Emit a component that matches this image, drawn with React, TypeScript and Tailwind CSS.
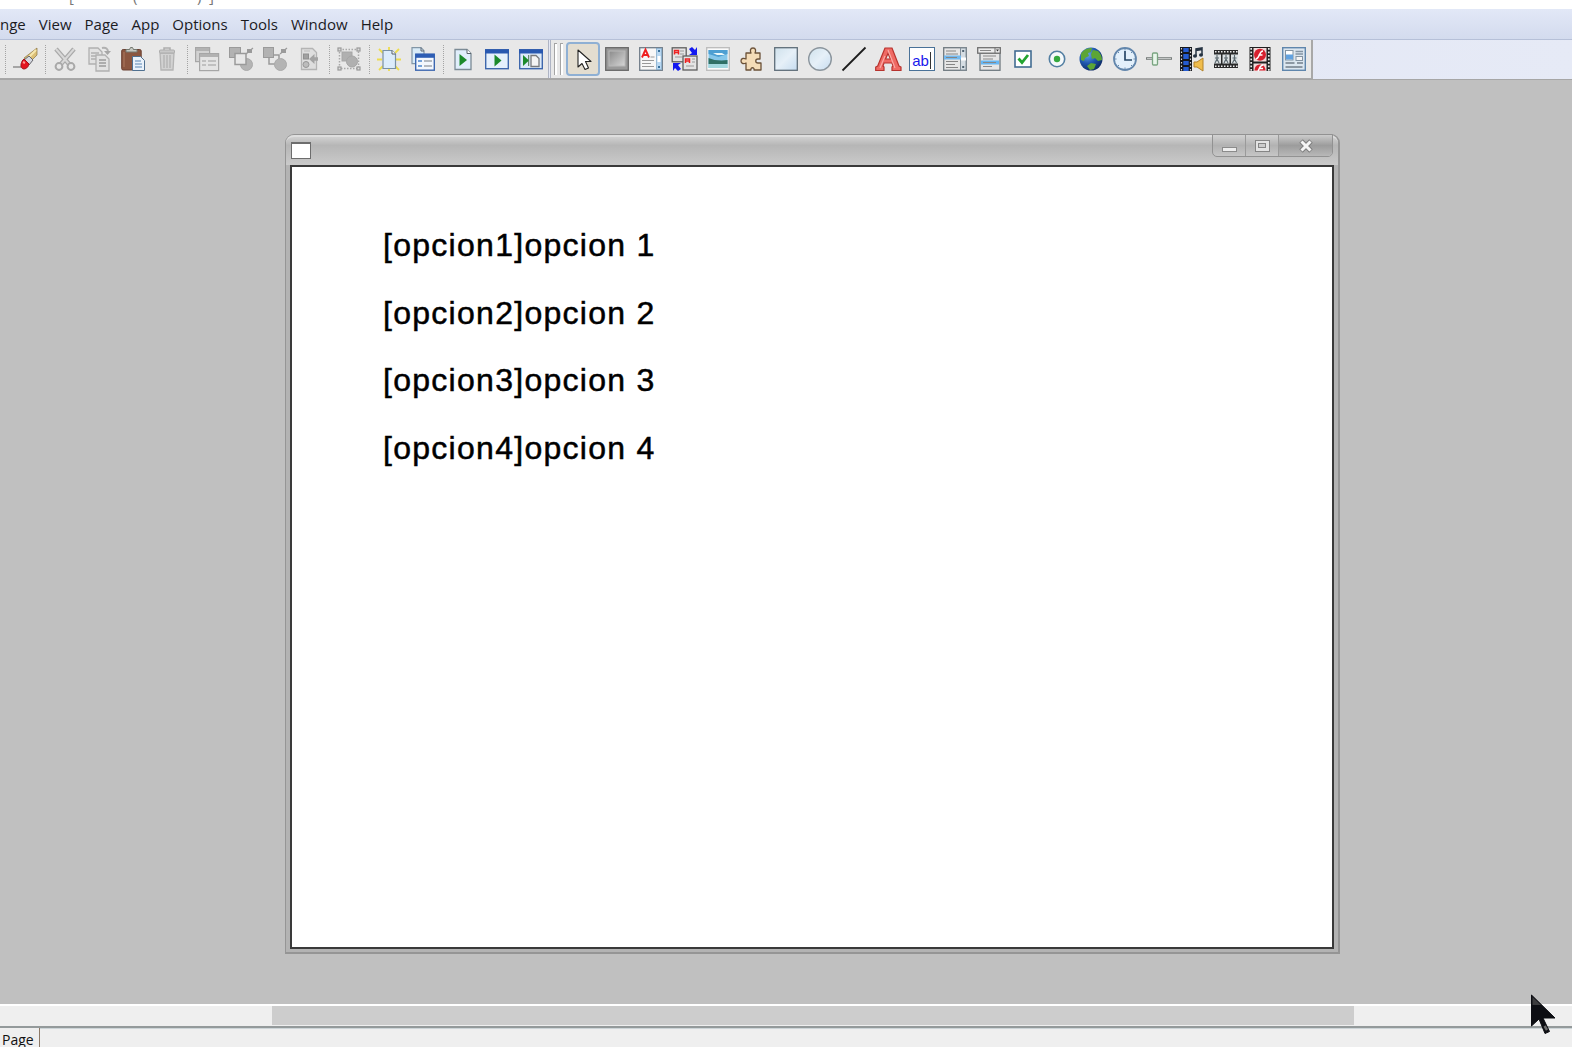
import type { ReactNode } from "react";

function Icon({ children, w = 24 }: { children: ReactNode; w?: number }) {
  return (
    <svg width={w} height="24" viewBox={`0 0 ${w} 24`} className="shrink-0 overflow-visible">
      {children}
    </svg>
  );
}

function Cell({ children }: { children: ReactNode }) {
  return <div className="flex w-[34px] shrink-0 items-center justify-center">{children}</div>;
}

function ToolCell({ children, active = false }: { children: ReactNode; active?: boolean }) {
  return (
    <div
      className={
        active
          ? "flex h-[34px] w-[33.86px] shrink-0 items-center justify-center rounded-[4px] border-2 border-[#8fb0d4] bg-[#e3ddd0]"
          : "flex h-[34px] w-[33.86px] shrink-0 items-center justify-center"
      }
    >
      {children}
    </div>
  );
}

function Sep() {
  return (
    <div className="flex w-[6px] shrink-0 justify-center">
      <div className="h-[29px] border-l border-dotted border-[#a4a4a4]" />
    </div>
  );
}

const Eraser = () => (
  <Icon>
    <path d="M0 20h8" stroke="#a5a5a5" strokeWidth="2" />
    <path d="M24 1v7l-8 8-5-5z" fill="#dcc077" stroke="#8a7440" strokeWidth=".7" />
    <path d="M23 3L13 13" stroke="#f6e7ae" strokeWidth="2" />
    <path d="M16 9l4 4-4 5-5-5z" fill="#d5d8e0" stroke="#66666c" strokeWidth="1" />
    <path d="M11 12l5 5c-1 5-6 6-7 4-2-1-1-7 2-9z" fill="#e41420" stroke="#a01018" />
    <path d="M10 15l2 1" stroke="#ff9a94" strokeWidth="2" />
  </Icon>
);

const Cut = () => (
  <Icon>
    <g fill="none" stroke="#a9a9a9">
      <path d="M3 2l13 15M21 2L8 17" strokeWidth="4.5" />
      <path d="M3 2l13 15M21 2L8 17" stroke="#d8d8d8" strokeWidth="2" />
      <circle cx="6" cy="19.5" r="3.4" strokeWidth="2" />
      <circle cx="18" cy="19.5" r="3.4" strokeWidth="2" />
    </g>
  </Icon>
);

const Copy = () => (
  <Icon>
    <g fill="#e2e2e2" stroke="#b0b0b0" strokeWidth="1.3">
      <path d="M2 1h9l4 4v12H2z" />
      <path d="M4 6h8M4 9h8M4 12h5" />
      <path d="M9 8h9l4 4v12H9z" />
      <path d="M12 13h7M12 16h7M12 19h7" stroke="#9c9c9c" />
      <path d="M15 1c4-1 6 1 6 4" fill="none" strokeWidth="2" />
      <path d="M17 4h7l-3.500 4z" fill="#a6a6a6" stroke="none" />
    </g>
  </Icon>
);

const Paste = () => (
  <Icon>
    <rect x=".7" y="2.500" width="19.500" height="20.500" rx="1.500" fill="#8b5640" stroke="#6a4032" />
    <path d="M3 5v15" stroke="#9c6850" strokeWidth="2" />
    <path d="M5 5V2.500h3.500l1-2h2l1 2H16V5z" fill="#c6c8c2" stroke="#747970" />
    <path d="M11.500 9.500h8l4 4v10h-12z" fill="#eaf2fb" stroke="#4f7090" />
    <path d="M14 14h6M14 17h7M14 20h7" stroke="#5b86b4" strokeWidth="1.200" />
  </Icon>
);

const Trash = () => (
  <Icon>
    <path d="M5 6h14l-1 17H6z" fill="#d2d2d2" stroke="#b4b4b4" strokeWidth="1.300" />
    <path d="M9 8v13M12 8v13M15 8v13" stroke="#b6b6b6" strokeWidth="1.500" />
    <rect x="4.500" y="3" width="15" height="3" rx="1" fill="#c8c8c8" stroke="#adadad" />
    <path d="M9 3V1h6v2" fill="none" stroke="#adadad" strokeWidth="1.500" />
  </Icon>
);

const NewObject = () => (
  <Icon>
    <g stroke="#a6a6a6" strokeWidth="1.200">
      <rect x=".6" y=".6" width="14" height="14" fill="#d2d2d2" />
      <path d="M1 2.500h13" stroke="#b2b2b2" strokeWidth="3" />
      <rect x="4.600" y="6.600" width="19" height="17" fill="#e4e4e4" />
      <path d="M5 8.500h18" stroke="#b2b2b2" strokeWidth="3" />
      <path d="M7 14h4M13 14h8M7 18h4M13 18h8" strokeWidth="2" stroke="#c0c0c0" />
    </g>
  </Icon>
);

const BringForward = () => (
  <Icon>
    <g stroke="#9a9a9a">
      <rect x=".5" y=".5" width="11" height="10" fill="#b2b2b2" />
      <circle cx="17.500" cy="17.500" r="6" fill="#b4b4b4" stroke="#aaa" />
      <rect x="6" y="6.500" width="11" height="11" fill="#e8e8e8" strokeWidth="1.500" />
      <path d="M18 2h5v4h-5z" fill="#9b9b9b" stroke="none" />
      <path d="M17 7l7-6" stroke="#9b9b9b" strokeWidth="1.200" />
    </g>
  </Icon>
);

const SendBack = () => (
  <Icon>
    <g stroke="#9a9a9a">
      <path d="M6 8v9h8M11 8h5v6" fill="none" strokeWidth="1.500" />
      <rect x=".5" y=".5" width="10" height="10" fill="#b2b2b2" />
      <circle cx="17.500" cy="17.500" r="6" fill="#b4b4b4" stroke="#aaa" />
      <path d="M18 2h5v4h-5z" fill="#9b9b9b" stroke="none" />
      <path d="M17 7l7-6" stroke="#9b9b9b" strokeWidth="1.200" />
    </g>
  </Icon>
);

const Library = () => (
  <Icon>
    <path d="M4.500 1.500h11l4 4v17h-15z" fill="#dedede" stroke="#b4b4b4" strokeWidth="1.300" />
    <rect x="6.500" y="7" width="5" height="5" fill="#a0a0a0" stroke="#8f8f8f" />
    <circle cx="9" cy="17.500" r="3" fill="#bcbcbc" stroke="#969696" />
    <path d="M7 4h6" stroke="#bbb" />
    <path d="M21 12h-5" stroke="#a3a3a3" strokeWidth="3.500" />
    <path d="M17.500 7v10L12 12z" fill="#a3a3a3" />
  </Icon>
);

const Group = () => (
  <Icon>
    <rect x="2.500" y="2.500" width="19" height="19" fill="none" stroke="#a8a8a8" strokeWidth="1.500" strokeDasharray="1.500 1.500" />
    <rect x="5" y="5" width="10" height="9" fill="#b0b0b0" stroke="#a6a6a6" />
    <circle cx="15" cy="14.500" r="5.500" fill="#b0b0b0" stroke="#a6a6a6" />
    <g fill="#ddd" stroke="#999" strokeWidth="1.200">
      <rect x="1" y="1" width="3" height="3" />
      <rect x="20" y="1" width="3" height="3" />
      <rect x="1" y="20" width="3" height="3" />
      <rect x="20" y="20" width="3" height="3" />
    </g>
  </Icon>
);

const NewPage = () => (
  <Icon>
    <path d="M2 2l4 4M22 2l-4 4M12 0v3M0 12.500h5M19 12.500h5M2 23l4-4M22 23l-4-4M12 24v-3" stroke="#eddc4e" strokeWidth="1.800" />
    <path d="M6 3.500h9l3.500 3.500v14.500H6z" fill="#dcecfb" stroke="#7890a4" strokeWidth="1.200" />
    <path d="M15 3.500V7h3.500" fill="#fff" stroke="#555f69" />
  </Icon>
);

const PageProps = () => (
  <Icon>
    <path d="M1 .7h9l3 3v13H1z" fill="#d8ebf8" stroke="#8296a6" strokeWidth="1.200" />
    <path d="M10 .7V4h3" fill="none" stroke="#5c6570" />
    <rect x="4.700" y="7.200" width="18.600" height="16" fill="#f3f7fd" stroke="#3c67b0" strokeWidth="1.400" />
    <path d="M4.500 8.800h19" stroke="#2d5db4" strokeWidth="4" />
    <path d="M7 14h4M7 19h4" stroke="#4d86cc" strokeWidth="1.500" />
    <path d="M13 14h8M13 19h8" stroke="#b4b9c0" strokeWidth="2" />
  </Icon>
);

const RunPage = () => (
  <Icon>
    <path d="M4 2.500h12l4 4v16H4z" fill="#e0eefb" stroke="#7c8b96" strokeWidth="1.300" />
    <path d="M16 2.500v4h4" fill="#fff" stroke="#59636b" />
    <path d="M8.500 7v12l7.500-6z" fill="#1b8a2b" />
  </Icon>
);

const RunWindow = () => (
  <Icon>
    <rect x=".7" y="2.700" width="22.600" height="19" fill="#e5f0fc" stroke="#3e67ac" strokeWidth="1.400" />
    <path d="M0 4.500h24" stroke="#2858b0" strokeWidth="4" />
    <path d="M9.500 7.500v12l7-6z" fill="#1b8a2b" />
  </Icon>
);

const RunFrom = () => (
  <Icon>
    <rect x=".7" y="2.700" width="22.600" height="19" fill="#dceaf9" stroke="#3e67ac" strokeWidth="1.400" />
    <path d="M0 4.500h24" stroke="#2858b0" strokeWidth="4" />
    <path d="M4 8v11l6-5.500z" fill="#1b8a2b" />
    <path d="M9.700 8v11" stroke="#4b744e" />
    <path d="M12 8.500h5l3 3v8h-8z" fill="#f4f4f4" stroke="#77797c" strokeWidth="1.300" />
  </Icon>
);

const Pointer = () => (
  <Icon>
    <path d="M7 3v17l4-3.500 3 6 3.500-1.500-3-6.500H20z" fill="#fff" stroke="#222" strokeWidth="1.100" strokeLinejoin="round" />
  </Icon>
);

const ButtonTool = () => (
  <Icon>
    <defs>
      <linearGradient id="metal" x1="0" y1="0" x2="1" y2="1">
        <stop offset="0" stopColor="#8a8a8a" />
        <stop offset="1" stopColor="#d6d6d6" />
      </linearGradient>
    </defs>
    <rect x=".7" y=".7" width="22.600" height="22.600" fill="#9a9a9a" stroke="#686868" strokeWidth="1.300" />
    <rect x="4" y="4" width="16" height="15" fill="url(#metal)" stroke="#b9b9b9" />
  </Icon>
);

const TextTool = () => (
  <Icon>
    <rect x=".7" y=".7" width="22.600" height="22.600" fill="#f7f7f7" stroke="#6f7c88" strokeWidth="1.300" />
    <rect x="17.500" y="1.500" width="5" height="21" fill="#b9d8f2" stroke="#7da6c8" strokeWidth=".7" />
    <path d="M20 3v2M20 19v2" stroke="#39719c" strokeWidth="2" />
    <rect x="18.500" y="9" width="3" height="6" fill="#fff" />
    <path d="M3 10.500L6.500 2.500 10 10.500M4 8h5" fill="none" stroke="#ef2020" strokeWidth="1.900" />
    <path d="M11.500 10h4M3 13.500h12M3 16.500h9M3 19.500h12" stroke="#999" strokeWidth="1.200" />
  </Icon>
);

const Exchange = () => (
  <Icon w={27}>
    <g stroke="#5e5e5e" strokeWidth="1.300" fill="#e4e4e4">
      <rect x="1.200" y=".8" width="14" height="14" />
      <rect x="12" y="9" width="14" height="14" />
    </g>
    <path d="M3.500 7.500v-4h4v4M3.500 5.500h4M14.500 16v-4h4v4M14.500 14h4" fill="none" stroke="#e22" strokeWidth="1.500" />
    <path d="M9 4h4M9 7h4M4 10h7M21 12h3M21 15h3M15 19h8" stroke="#999" strokeWidth="1.100" />
    <path d="M26 0v8h-8l3-2-3-4 3-2 3 3zM2 24v-8h8l-3 2 3 4-3 2-3-3z" fill="#1218f0" />
  </Icon>
);

const ImageTool = () => (
  <Icon>
    <rect x=".7" y=".7" width="22.600" height="22.600" fill="#fbfbfb" stroke="#bababa" strokeWidth="1.300" />
    <rect x="2.500" y="3" width="19" height="18" fill="#86c7ea" />
    <path d="M2.500 3h19v4l-9 3-10-3z" fill="#4e9fd2" />
    <path d="M7 6h9l3 2h-8z" fill="#ecf8fa" />
    <path d="M2.500 11l6 2 7 .5 6-.5v4h-19z" fill="#2f7065" />
    <path d="M2.500 17h19v4h-19z" fill="#a3d8de" />
  </Icon>
);

const Puzzle = () => (
  <Icon>
    <path
      d="M6 6h5c-1-2-1-5 2-5s3 3 2 5h5v6h-2c-3 0-3 4 0 4h3v7h-7c1-3-4-3-3 0H6v-7c-2 1-5 1-5-2s3-3 5-2z"
      fill="#f4dcb8"
      stroke="#6b5138"
      strokeWidth="1.300"
      strokeLinejoin="round"
    />
  </Icon>
);

const RectTool = () => (
  <Icon>
    <defs>
      <linearGradient id="sky" x1="0" y1="0" x2="1" y2="1">
        <stop offset="0" stopColor="#cfe1ec" />
        <stop offset=".5" stopColor="#e6f0f8" />
        <stop offset="1" stopColor="#c6dcf0" />
      </linearGradient>
    </defs>
    <rect x=".7" y=".7" width="22.600" height="22.600" fill="url(#sky)" stroke="#5f6e79" strokeWidth="1.300" />
  </Icon>
);

const CircleTool = () => (
  <Icon>
    <circle cx="12" cy="12" r="11.300" fill="url(#sky)" stroke="#8b959d" strokeWidth="1.400" />
  </Icon>
);

const LineTool = () => (
  <Icon>
    <path d="M.5 23.500L23.500.5" stroke="#1c1c1c" strokeWidth="1.800" />
  </Icon>
);

const Letter = () => (
  <Icon w={26}>
    <path
      fillRule="evenodd"
      d="M10 1h7l7 18 2 1v3.500h-9V20l1-1-1-3H9l-1 3 1 1v3.500H.7V20l2-1zM13 6.500L10.500 12h5z"
      fill="#ef6a64"
      stroke="#b7332e"
      strokeWidth="1.200"
    />
    <path d="M13 3l7 18M5 21l5-12" stroke="#f9aaa5" strokeWidth="1.200" fill="none" />
  </Icon>
);

const Entry = () => (
  <div className="flex h-6 w-[26px] items-center justify-center border-[1.500px] border-solid border-[#4a7298] bg-white pt-[3px] font-['Liberation_Sans'] text-[15px] leading-none text-[#1a1aec]">
    ab<span className="ml-px h-[17px] w-px bg-[#333]" />
  </div>
);

const ListBox = () => (
  <Icon>
    <rect x=".7" y=".7" width="22.600" height="22.600" fill="#e6e6e6" stroke="#707a80" strokeWidth="1.300" />
    <rect x="17.500" y="1" width="5.500" height="22" fill="#d5dde3" stroke="#83909a" strokeWidth="1" />
    <path d="M1 10.500h17" stroke="#73b9ef" strokeWidth="4" />
    <path d="M3 4h10M3 7h12M3 10.500h11M3 14.500h12M3 17.500h9M3 20.500h12" stroke="#858585" strokeWidth="1.200" />
    <path d="M20.200 3v2M20.200 19v2" stroke="#526472" strokeWidth="2" />
    <path d="M18 12h5" stroke="#fff" strokeWidth="3" />
  </Icon>
);

const ComboBox = () => (
  <Icon>
    <rect x="3" y="6" width="20" height="17.300" fill="#e6e6e6" stroke="#707a80" strokeWidth="1.300" />
    <rect x=".7" y=".7" width="22.600" height="5.500" fill="#ececec" stroke="#707070" strokeWidth="1.300" />
    <path d="M18 .7v5.500" stroke="#707070" />
    <path d="M19 2.500h3l-1.500 2z" fill="#333" />
    <path d="M4 15.500h18" stroke="#65b6f3" strokeWidth="4" />
    <path d="M3 3.500h11M6 9h13M6 12h10M6 15.500h13M6 19.500h9" stroke="#888" strokeWidth="1.100" />
  </Icon>
);

const Check = () => (
  <Icon>
    <rect x="4" y="4" width="16" height="16" fill="#fff" stroke="#426c92" strokeWidth="1.600" />
    <path d="M7.500 11.500l3.500 4 6-7.500" fill="none" stroke="#23a42f" strokeWidth="2.800" />
  </Icon>
);

const RadioTool = () => (
  <Icon>
    <circle cx="12" cy="12" r="7.700" fill="#f5f9fb" stroke="#537fa2" strokeWidth="1.600" />
    <circle cx="12" cy="12" r="3.200" fill="#34a93e" />
  </Icon>
);

const Globe = () => (
  <Icon>
    <defs>
      <radialGradient id="sea" cx=".35" cy=".3" r=".8">
        <stop offset="0" stopColor="#6ba8ee" />
        <stop offset=".5" stopColor="#1e56ac" />
        <stop offset="1" stopColor="#0b2358" />
      </radialGradient>
    </defs>
    <circle cx="12" cy="12" r="11.500" fill="url(#sea)" />
    <path d="M2 7C4 3 8 1 13 1l-1 4-3 1 1 3-4 2-1 3-3-1zM14 3l5 1c3 3 4 6 4 9l-4 1-3-3-3 1-1-5zM12 16l5 1-2 5-4 1-3-4z" fill="#5ca536" />
  </Icon>
);

const Clock = () => (
  <Icon>
    <circle cx="12" cy="12" r="11" fill="#e3f0fb" stroke="#6286ac" strokeWidth="1.800" />
    <path d="M12 4v9h7" fill="none" stroke="#294868" strokeWidth="1.700" />
    <path d="M12 2v1.500M12 20.500V22M2 12h1.500M20.500 12H22M5 5l1 1M19 5l-1 1M5 19l1-1M19 19l-1-1" stroke="#6286ac" />
  </Icon>
);

const Slider = () => (
  <Icon w={26}>
    <path d="M0 11.500h26" stroke="#777d7b" strokeWidth="2.600" />
    <path d="M1 11.500h24" stroke="#c2c5c4" />
    <rect x="6.500" y="6" width="5" height="12" rx="1" fill="#e9f6eb" stroke="#7aa581" strokeWidth="1.300" />
  </Icon>
);

const MediaTool = () => (
  <Icon>
    <rect x="0" y="0" width="12" height="24" fill="#15171c" />
    <path d="M1.500 1v23M10.500 1v23" stroke="#d5d5d5" strokeWidth="1.200" strokeDasharray="1.500 2" />
    <path d="M3.300 1h5.400v4H3.300zM3.300 7h5.400v5H3.300zM3.300 14h5.400v4H3.300zM3.300 20h5.400v4H3.300z" fill="#245bd0" />
    <path d="M16 9V2l6-1v7M16 3.500l6-1" fill="none" stroke="#263342" strokeWidth="1.500" />
    <ellipse cx="15" cy="9" rx="2" ry="1.700" fill="#263342" />
    <ellipse cx="21" cy="8" rx="2" ry="1.700" fill="#263342" />
    <path d="M14 15h3l6-4v13l-6-4h-3z" fill="#f0bd4c" stroke="#b38229" />
  </Icon>
);

const Animation = () => (
  <Icon>
    <rect x="0" y="3" width="24" height="18" fill="#2a2a2a" />
    <path d="M1 4.800h23M1 19.200h23" stroke="#eee" strokeWidth="1.600" strokeDasharray="1.500 1.500" />
    <path d="M0 7.500h7v9H0zM8.500 7.500h7v9h-7zM17 7.500h7v9h-7z" fill="#dce1e3" />
    <path d="M3 8v4l-2 4M3 12l2 4M1 11h4M12 8v4l-2 4M12 12l2 4M10 11h4M20.500 8v4l-2 4M20.500 12l2 4M18.500 11h4" fill="none" stroke="#59666c" strokeWidth="1.100" />
  </Icon>
);

const FlashTool = () => (
  <Icon>
    <rect x="1.500" y="0" width="21" height="24" fill="#202020" />
    <path d="M3.200 1v23M20.800 1v23" stroke="#eee" strokeWidth="1.700" strokeDasharray="1.700 1.800" />
    <path d="M5.500 1h13v13.500h-13zM5.500 16.500h13V24h-13z" fill="#f2dada" />
    <circle cx="12" cy="7.800" r="6" fill="#d8202e" />
    <path d="M6.500 23.500c0-8 11-8 11 0z" fill="#d8202e" />
    <path d="M15 4c-4 0-3 7-7 8M10.500 8h4M15 18c-3 0-3 3-5 6M11 21.500h4" fill="none" stroke="#fff" strokeWidth="1.500" />
  </Icon>
);

const FormTool = () => (
  <Icon>
    <rect x=".7" y=".7" width="22.600" height="22.600" fill="#dbe6ef" stroke="#5f86ac" strokeWidth="1.400" />
    <rect x="3.500" y="3.500" width="7.500" height="9.500" fill="#fff" stroke="#8494a2" />
    <path d="M4 10h7" stroke="#62a2df" strokeWidth="5" />
    <path d="M13.500 4.500h7.500M13.500 7h7.500" stroke="#8494a2" strokeWidth="1.300" />
    <rect x="14" y="9.500" width="6.500" height="4" fill="#f4f4f4" stroke="#8494a2" />
    <path d="M3.500 16h9M3.500 20h17M15 16h6" stroke="#8c98a3" strokeWidth="1.800" />
  </Icon>
);

const MENU = ["nge", "View", "Page", "App", "Options", "Tools", "Window", "Help"];

function Caption() {
  return (
    <div className="flex h-[23px] w-[121px] overflow-hidden rounded-b-[5px] border border-[#929292] bg-gradient-to-b from-[#d2d2d2] via-[#b2b2b2] to-[#c6c6c6]">
      <div className="flex w-[33px] items-center justify-center border-r border-[#9a9a9a] pt-[7px]">
        <div className="h-[5px] w-[15px] border border-[#8b8b8b] bg-[#eee]" />
      </div>
      <div className="flex w-[33px] items-center justify-center border-r border-[#9a9a9a]">
        <div className="flex h-[12px] w-[15px] items-center justify-center border border-[#858585] bg-[#e3e3e3]">
          <div className="h-[5px] w-[8px] border border-[#858585] bg-[#ccc]" />
        </div>
      </div>
      <div className="flex flex-1 items-center justify-center bg-gradient-to-b from-[#cccccc] via-[#9c9c9c] to-[#b8b8b8]">
        <svg width="16" height="14" viewBox="0 0 16 14">
          <path d="M3 2l10 10M13 2L3 12" stroke="#7e7e7e" strokeWidth="5" />
          <path d="M3.500 2.500l9 9M12.500 2.500l-9 9" stroke="#f4f4f4" strokeWidth="3" />
        </svg>
      </div>
    </div>
  );
}

export default function App() {
  return (
    <div className="relative flex h-[1047px] w-[1572px] flex-col overflow-hidden bg-[#c0c0c0] font-['Open_Sans',sans-serif]">
      <div className="flex h-[9px] shrink-0 items-start overflow-hidden bg-white pl-[69px] text-[15px] leading-[20px] text-[#777]">
        <div className="-mt-[14px] flex">
          <span className="w-[64px]">[</span>
          <span className="w-[64px]">(</span>
          <span className="w-[12px]">)</span>
          <span>]</span>
        </div>
      </div>

      <nav className="flex h-[31px] shrink-0 items-center gap-[13px] border-b border-[#b6c0d8] bg-gradient-to-b from-[#e2e8f7] to-[#d3dbee] text-[15px] text-[#1b1b1f]">
        {MENU.map((m) => (
          <span key={m}>{m}</span>
        ))}
      </nav>

      <div className="flex h-[39px] shrink-0 bg-gradient-to-r from-[#dde2f3] to-[#e6eaf6]">
        <div className="flex w-[1313px] items-center border-r-2 border-b border-[#a8a8a8] bg-[#e8e8e8] pl-px">
          <div className="w-px" />
          <Sep />
          <Cell><Eraser /></Cell>
          <Sep />
          <Cell><Cut /></Cell>
          <Cell><Copy /></Cell>
          <Cell><Paste /></Cell>
          <Cell><Trash /></Cell>
          <Sep />
          <Cell><NewObject /></Cell>
          <Cell><BringForward /></Cell>
          <Cell><SendBack /></Cell>
          <Cell><Library /></Cell>
          <Sep />
          <Cell><Group /></Cell>
          <Sep />
          <Cell><NewPage /></Cell>
          <Cell><PageProps /></Cell>
          <Sep />
          <Cell><RunPage /></Cell>
          <Cell><RunWindow /></Cell>
          <Cell><RunFrom /></Cell>
          <div className="flex h-full w-[18px] shrink-0 items-center gap-[3px]">
            <div className="h-full w-[3px] border-x border-[#aeb4c4] bg-[#e4e8f4]" />
            <div className="h-[32px] w-[3px] border-t border-l border-[#a4a4a4] bg-white" />
            <div className="h-[32px] w-[3px] border-t border-l border-[#a4a4a4] bg-white" />
          </div>
          <ToolCell active><Pointer /></ToolCell>
          <ToolCell><ButtonTool /></ToolCell>
          <ToolCell><TextTool /></ToolCell>
          <ToolCell><Exchange /></ToolCell>
          <ToolCell><ImageTool /></ToolCell>
          <ToolCell><Puzzle /></ToolCell>
          <ToolCell><RectTool /></ToolCell>
          <ToolCell><CircleTool /></ToolCell>
          <ToolCell><LineTool /></ToolCell>
          <ToolCell><Letter /></ToolCell>
          <ToolCell><Entry /></ToolCell>
          <ToolCell><ListBox /></ToolCell>
          <ToolCell><ComboBox /></ToolCell>
          <ToolCell><Check /></ToolCell>
          <ToolCell><RadioTool /></ToolCell>
          <ToolCell><Globe /></ToolCell>
          <ToolCell><Clock /></ToolCell>
          <ToolCell><Slider /></ToolCell>
          <ToolCell><MediaTool /></ToolCell>
          <ToolCell><Animation /></ToolCell>
          <ToolCell><FlashTool /></ToolCell>
          <ToolCell><FormTool /></ToolCell>
        </div>
      </div>

      <main className="h-[925px] shrink-0 border-t border-[#a6a6a6] pt-[54px] pl-[285px]">
        <section className="flex h-[820px] w-[1055px] flex-col rounded-t-[9px] border border-r-2 border-b-2 border-[#959595] bg-[#b3b3b3] px-[4px] pb-[3px]">
          <header className="-mx-[4px] flex h-[30px] shrink-0 justify-between rounded-t-[8px] border-t-2 border-[#dedede] bg-gradient-to-b from-[#d0d0d0] via-[#b6b6b6] via-30% to-[#cacaca] pr-[5px] pl-[5px]">
            <div className="mt-[5px] h-[17px] w-[20px] border border-t-2 border-[#6d6d6d] bg-white" />
            <div className="-mt-[3px]">
              <Caption />
            </div>
          </header>
          <div className="flex-1 border-2 border-[#3a3a3a] bg-white pt-[45px] pl-[91px] font-['Liberation_Sans',sans-serif] text-[32px] leading-[67.600px] tracking-[1.280px] text-black [-webkit-text-stroke:0.500px_#000]">
            {[1, 2, 3, 4].map((n) => (
              <p key={n} className="whitespace-pre">{`[opcion${n}]opcion ${n}`}</p>
            ))}
          </div>
        </section>
      </main>

      <div className="h-[22px] shrink-0 border-t-2 border-white bg-[#efefef] pl-[272px]">
        <div className="h-[19px] w-[1082px] bg-[#cdcdcd]" />
      </div>
      <footer className="flex h-[21px] shrink-0 border-t-2 border-[#949a9b] bg-[#efefef] text-[14px] leading-[24px] text-[#111]">
        <div className="w-[40px] border-r border-[#8d7a68] pl-[2px]">Page</div>
        <div className="h-px flex-1 bg-[#cdd5d8]" />
      </footer>

      <svg width="25" height="41" viewBox="0 0 25 41" className="absolute top-[994px] left-[1531px]">
        <path d="M.5 1v31l7.500-7 6 14.500 4.500-2-6.500-13.500h12z" fill="#0d0e13" stroke="#0d0e13" />
        <path d="M1.500 3l8.500 8H1.500z" fill="#3c3c3e" />
        <path d="M13.500 32l2.500 4" stroke="#6c6c6c" strokeWidth="2.500" />
      </svg>
    </div>
  );
}
